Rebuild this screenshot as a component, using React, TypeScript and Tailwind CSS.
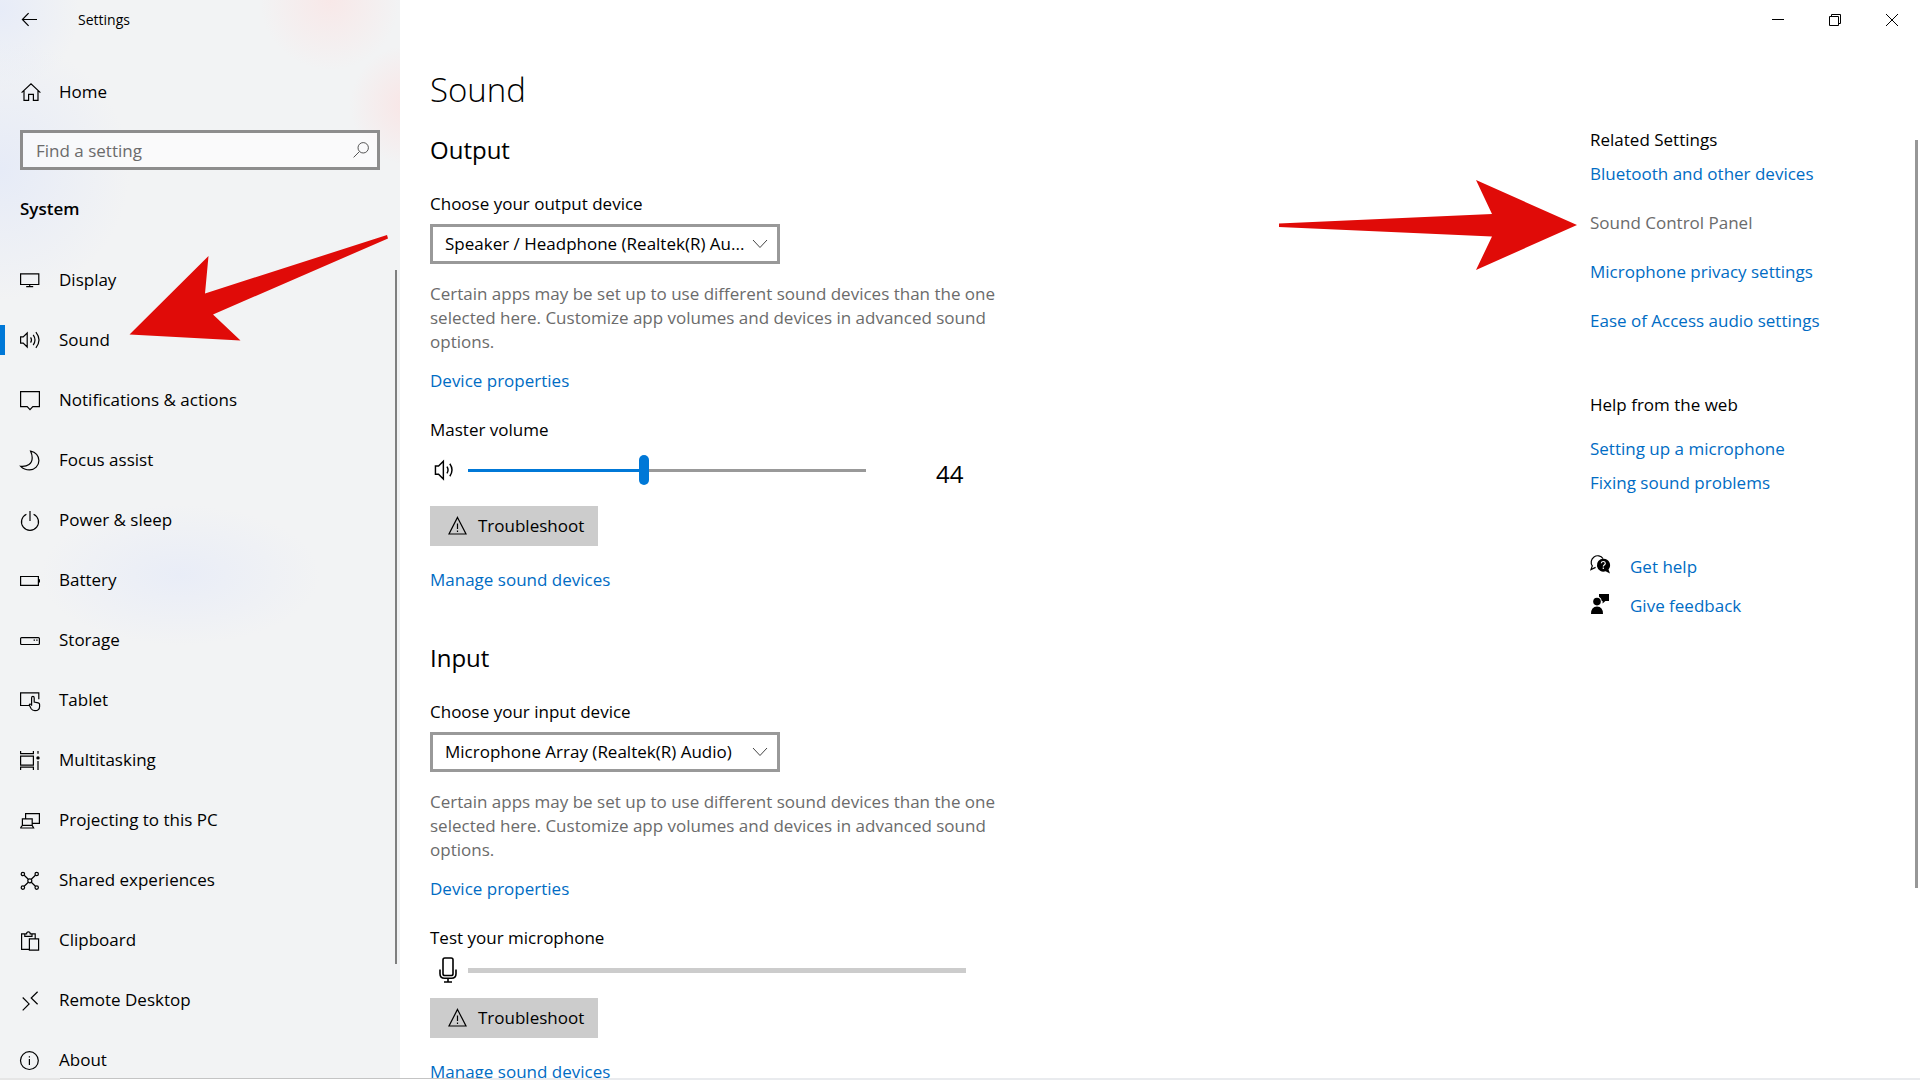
import { useState } from 'react'
import type { ReactNode } from 'react'

/* ── 공통 아이콘 래퍼 (20x20) ─────────────────────────── */
function Icon({ children, className = 'h-5 w-5' }: { children: ReactNode; className?: string }) {
  return (
    <svg
      viewBox="0 0 20 20"
      fill="none"
      stroke="currentColor"
      strokeWidth="1.2"
      className={`shrink-0 overflow-visible ${className}`}
      aria-hidden="true"
    >
      {children}
    </svg>
  )
}

interface NavItem {
  label: string
  icon: ReactNode
}

const NAV_ITEMS: NavItem[] = [
  {
    label: 'Display',
    icon: <path d="M.6 3.9h18.2v10.6H.6zM9.7 14.5v2.2M6.2 16.7h7" />,
  },
  {
    label: 'Sound',
    icon: (
      <path d="M.6 6.9h2.6L7.2 3v14l-4-3.900H.6zM10.6 7.400q1.800 2.600 0 5.200M13.200 4.900q3.600 5.100 0 10.200M15.900 2.200q6.200 7.800 0 15.600" />
    ),
  },
  {
    label: 'Notifications & actions',
    icon: <path d="M.6 1.6h18.8v15h-6.6L10 19.6l-2.8-3H.6z" />,
  },
  {
    label: 'Focus assist',
    icon: (
      <path d="M10.6 1.2c5 .8 8.3 4.6 8.3 9.3a9.3 9.3 0 0 1-9.3 9.4c-3.6 0-6.8-1.4-8.9-3.6 6.8.6 11.5-2.4 11.5-8.5 0-2.4-.6-4.6-1.6-6.6z" />
    ),
  },
  {
    label: 'Power & sleep',
    icon: <path d="M6.4 4.2a8.5 8.5 0 1 0 7.2 0M10 1v10" />,
  },
  {
    label: 'Battery',
    icon: <path d="M.6 6.5h17.8v8.8H.6zM19.4 9.2v3.4" />,
  },
  {
    label: 'Storage',
    icon: (
      <>
        <rect x=".6" y="7.6" width="18.8" height="6.9" rx="1" />
        <path d="M13.6 10.2H15M16.2 10.2h1.4" />
      </>
    ),
  },
  {
    label: 'Tablet',
    icon: (
      <path d="M9 15.5H.6V2.9h18.2v6.3M11.6 15.800V7.900q0-1.500 1.300-1.500t1.300 1.500v4.200l4 .8q1.400.3 1.400 1.700v1.800q0 4.200-4.700 4.200-2.600 0-3.700-1.800l-1.700-3.200q-.5-1.300.6-1.600.9-.1 1.500 1.200" />
    ),
  },
  {
    label: 'Multitasking',
    icon: (
      <>
        <path d="M.6 1v2.6h12.8V1M.6 6.2h12.8v9H.6zM.6 19.900v-2.800h12.800v2.800M18 1v2.800M18 11v8.900" />
        <circle cx="18" cy="7.9" r="1.7" fill="currentColor" stroke="none" />
      </>
    ),
  },
  {
    label: 'Projecting to this PC',
    icon: <path d="M5.6 8.700V3.600h13.800v9.800h-7.200M2.400 15.400V8.900h9.800v6.500M.8 18v-.6l1.600-2h9.800l1.400 2.600z" />,
  },
  {
    label: 'Shared experiences',
    icon: (
      <>
        <circle cx="2.9" cy="4" r="1.7" />
        <circle cx="16.7" cy="4" r="1.7" />
        <circle cx="2.9" cy="17.6" r="1.7" />
        <circle cx="16.7" cy="17.6" r="1.7" />
        <circle cx="9.8" cy="10.8" r="2" />
        <path d="m4.200 5.300 4.100 4M15.400 5.300l-4.100 4M4.200 16.300l4.100-4M15.400 16.300l-4.100-4" />
      </>
    ),
  },
  {
    label: 'Clipboard',
    icon: <path d="M9 19.400H1.600V3.800h3.200M12 3.800h3.200v4.900M9.400 8.800h9.200v11.400H9.400zM4.800 6.400V3.800h1.800q0-2 1.800-2t1.800 2H12v2.600z" />,
  },
  {
    label: 'Remote Desktop',
    icon: <path d="m2.7 7.500 6.400 6.400-6.400 6.500M17.600 1.700 11.200 8l6.400 6.300" />,
  },
  {
    label: 'About',
    icon: (
      <>
        <circle cx="9.4" cy="10.6" r="8.9" />
        <path d="M9.4 9v6M9.4 6.200v1.400" />
      </>
    ),
  },
]

const LINK = 'text-[#006cc4] hover:text-gray-500'

/* ── 장치 선택 드롭다운 ──────────────────────────────── */
function DeviceSelect({ id, label, value }: { id: string; label: string; value: string }) {
  return (
    <div className="mt-[26px]">
      <label htmlFor={id} className="block">
        {label}
      </label>
      <div className="relative mt-2 w-[350px]">
        <select
          id={id}
          className="h-10 w-full appearance-none border-[3px] border-[#999999] bg-white pl-3 pr-7 outline-none"
        >
          <option>{value}</option>
        </select>
        <svg
          viewBox="0 0 16 10"
          fill="none"
          stroke="#444"
          className="pointer-events-none absolute right-3 top-[15px] h-[10px] w-4"
          aria-hidden="true"
        >
          <path d="m1 1 7 7.500L15 1" />
        </svg>
      </div>
      <p className="mt-[18px] text-[#6b6b6b]">
        Certain apps may be set up to use different sound devices than the one
        <br />
        selected here. Customize app volumes and devices in advanced sound
        <br />
        options.
      </p>
      <a href="#properties" className={`mt-[15px] block w-fit ${LINK}`}>
        Device properties
      </a>
    </div>
  )
}

/* ── 문제 해결 버튼 + 관리 링크 ──────────────────────── */
function DeviceActions() {
  return (
    <>
      <button type="button" className="flex h-10 w-[168px] items-center gap-[10px] bg-[#cccccc] pl-[18px]">
        <Icon>
          <path d="M9.500 1.400 18 18H1zM9.500 7.400v5.600M9.500 14.400v1.500" />
        </Icon>
        Troubleshoot
      </button>
      <a href="#manage" className={`mt-[22px] block w-fit whitespace-nowrap ${LINK}`}>
        Manage sound devices
      </a>
    </>
  )
}

function Sidebar() {
  return (
    <aside className="relative flex w-[400px] shrink-0 flex-col bg-[#f2f3f4] bg-[radial-gradient(circle_at_330px_0px,#f8e8e8_0px,transparent_70px),radial-gradient(circle_at_410px_105px,#f9e5e5_0px,transparent_60px),radial-gradient(circle_at_0px_170px,#e6ebf7_0px,transparent_130px),radial-gradient(circle_at_0px_10px,#e7ecf8_0px,transparent_80px),radial-gradient(ellipse_140px_70px_at_180px_575px,#e9edf7_0%,transparent_100%)]">
      <header className="flex h-10 shrink-0 items-center pl-5">
        <button type="button" aria-label="Back" className="h-5 w-5">
          <Icon>
            <path d="M17 9.500H2.500M8.600 3.200 2.400 9.500l6.200 6.300" />
          </Icon>
        </button>
        <h2 className="pl-[38px] text-[14px]">Settings</h2>
      </header>

      <a href="#home" className="mt-8 flex h-10 shrink-0 items-center pl-5">
        <Icon>
          <path d="M1.600 10.600 11 1.900l9.400 8.700M4 8.500v9.900h4.600v-6h4.800v6H18V8.500" />
        </Icon>
        <span className="pl-[19px]">Home</span>
      </a>

      <div className="relative mx-5 mt-[18px] shrink-0">
        <input
          type="text"
          aria-label="Find a setting"
          placeholder="Find a setting"
          className="block h-10 w-full border-[3px] border-[#8d8d8d] bg-white/60 px-[13px] outline-none placeholder:text-[#6b6b6b] placeholder:opacity-100"
        />
        <svg
          viewBox="0 0 16 16"
          fill="none"
          stroke="#555"
          className="absolute right-[11px] top-3 h-4 w-4"
          aria-hidden="true"
        >
          <circle cx="10.2" cy="5.8" r="5.2" />
          <path d="M6.400 9.600.6 15.400" />
        </svg>
      </div>

      <h1 className="mt-[27px] shrink-0 pl-5 font-semibold">System</h1>

      <nav className="mt-[29px] shrink-0">
        <ul>
          {NAV_ITEMS.map((item) => (
            <li key={item.label} className="relative">
              {item.label === 'Sound' && (
                <span className="absolute left-0 top-[15px] h-[30px] w-[5px] bg-[#0078d7]" />
              )}
              <a href={`#${item.label}`} className="flex h-[60px] items-center pl-5">
                <Icon>{item.icon}</Icon>
                <span className="pl-[19px]">{item.label}</span>
              </a>
              {item.label === 'Sound' && (
                <svg
                  viewBox="0 0 260 108"
                  fill="#e00b08"
                  className="pointer-events-none absolute -top-[75px] left-[129px] h-[108px] w-[260px]"
                  aria-hidden="true"
                >
                  <path d="M.5 99.500 79.500 21 76 58.500 258 0l1 3.500L84 79.500l27.500 26z" />
                </svg>
              )}
            </li>
          ))}
        </ul>
      </nav>

      <div className="absolute right-[3px] top-[270px] h-[694px] w-[2px] bg-[#7f7f7f]" />
    </aside>
  )
}

function WindowControls() {
  return (
    <header className="flex h-10 shrink-0 justify-end text-black">
      <button type="button" aria-label="Minimize" className="flex w-[57px] items-center justify-center">
        <svg viewBox="0 0 12 12" className="h-3 w-3" stroke="currentColor" aria-hidden="true">
          <path d="M0 5.500h12" />
        </svg>
      </button>
      <button type="button" aria-label="Restore" className="flex w-[57px] items-center justify-center">
        <svg viewBox="0 0 12 12" className="h-3 w-3" fill="none" stroke="currentColor" aria-hidden="true">
          <path d="M.5 2.500h9v9h-9zM2.500 2.500v-2h9v9h-2" />
        </svg>
      </button>
      <button type="button" aria-label="Close" className="flex w-[57px] items-center justify-center">
        <svg viewBox="0 0 12 12" className="h-3 w-3" stroke="currentColor" aria-hidden="true">
          <path d="m0 0 12 12M12 0 0 12" />
        </svg>
      </button>
    </header>
  )
}

function RelatedSettings() {
  return (
    <aside className="w-[330px] shrink-0 whitespace-nowrap pt-[88px]">
      <h2>Related Settings</h2>
      <ul className="mt-[10px] space-y-[25px]">
        <li>
          <a href="#bluetooth" className={LINK}>Bluetooth and other devices</a>
        </li>
        <li className="relative">
          <a href="#panel" className="text-[#6b6b6b]">Sound Control Panel</a>
          <svg
            viewBox="0 0 298 90"
            fill="#e00b08"
            className="pointer-events-none absolute -left-[311px] -top-[31px] h-[90px] w-[298px]"
            aria-hidden="true"
          >
            <path d="M0 43.500 213 34 197 0l101 45-101 45 16-33.500L0 47z" />
          </svg>
        </li>
        <li>
          <a href="#privacy" className={LINK}>Microphone privacy settings</a>
        </li>
        <li>
          <a href="#ease" className={LINK}>Ease of Access audio settings</a>
        </li>
      </ul>

      <h2 className="mt-[60px]">Help from the web</h2>
      <ul className="mt-5 space-y-[10px]">
        <li>
          <a href="#setup" className={LINK}>Setting up a microphone</a>
        </li>
        <li>
          <a href="#fixing" className={LINK}>Fixing sound problems</a>
        </li>
      </ul>

      <ul className="mt-[60px] space-y-[15px]">
        <li className="flex gap-5">
          <Icon>
            <path d="M5.600 12.400 1 14.600l1.300-3.700A6.200 6.200 0 1 1 13 3.600" />
            <path
              d="M13.300 3.700a6.500 6.500 0 1 0 2.300 12.600L20 18.600l-1.500-4.200A6.500 6.500 0 0 0 13.300 3.700z"
              fill="currentColor"
              stroke="none"
            />
            <path d="M11.300 8.200q.2-1.700 2-1.700t2 1.700q0 1-1.100 1.700-.9.600-.9 1.600M13.300 12.600v1.500" stroke="#fff" />
          </Icon>
          <a href="#help" className={LINK}>Get help</a>
        </li>
        <li className="flex gap-5">
          <Icon>
            <g fill="currentColor" stroke="none">
              <circle cx="7" cy="7.600" r="3.800" />
              <path d="M1 20q0-7.600 6-7.600t6 7.600zM9 0h10v7h-3.600L12.600 9.400V7h-.8Q11.600 4 9 2.800z" />
            </g>
          </Icon>
          <a href="#feedback" className={LINK}>Give feedback</a>
        </li>
      </ul>
    </aside>
  )
}

export default function App() {
  const [volume, setVolume] = useState(44)

  return (
    <div className="flex h-screen flex-col overflow-hidden bg-white font-['Open_Sans','Noto_Sans',sans-serif] text-[17px] leading-6 text-black">
      <div className="flex min-h-0 flex-1 overflow-hidden">
        <Sidebar />

        <div className="relative flex min-w-0 flex-1 flex-col">
          <WindowControls />

          <div className="flex min-h-0 flex-1 justify-between overflow-hidden pl-[30px]">
            <main className="w-[600px] shrink-0 pt-[26px]">
              <h1 className="text-[33px] font-light leading-[48px]">Sound</h1>

              <section>
                <h2 className="mt-5 text-[24px] leading-8">Output</h2>
                <DeviceSelect
                  id="output-device"
                  label="Choose your output device"
                  value="Speaker / Headphone (Realtek(R) Au..."
                />
                <label htmlFor="volume" className="mt-[25px] block">
                  Master volume
                </label>
                <div className="mb-[21px] mt-[13px] flex h-[30px] items-center">
                  <Icon className="ml-1 h-6 w-6">
                    <path d="M1.200 6.600h2.600l4-4v15l-4-4H1.200zM10.800 7.200q1.800 2.800 0 5.600M13.200 4.800q3.600 5.200 0 10.400" />
                  </Icon>
                  <input
                    id="volume"
                    type="range"
                    min={0}
                    max={100}
                    value={volume}
                    onChange={(e) => setVolume(Number(e.target.value))}
                    style={{
                      backgroundImage: `linear-gradient(to right, #0078d7 ${volume}%, #999999 ${volume}%)`,
                    }}
                    className="ml-[10px] h-[3px] w-[398px] appearance-none outline-none [&::-webkit-slider-thumb]:h-[30px] [&::-webkit-slider-thumb]:w-[10px] [&::-webkit-slider-thumb]:appearance-none [&::-webkit-slider-thumb]:rounded-full [&::-webkit-slider-thumb]:bg-[#0078d7]"
                  />
                  <output htmlFor="volume" className="ml-[70px] pt-2 text-[24px] leading-8">
                    {volume}
                  </output>
                </div>
                <DeviceActions />
              </section>

              <section>
                <h2 className="mt-[50px] text-[24px] leading-8">Input</h2>
                <DeviceSelect
                  id="input-device"
                  label="Choose your input device"
                  value="Microphone Array (Realtek(R) Audio)"
                />
                <h3 className="mt-[25px]">Test your microphone</h3>
                <div className="mb-[13px] mt-[5px] flex h-[30px] items-center">
                  <svg
                    viewBox="0 0 18 26"
                    fill="none"
                    stroke="currentColor"
                    strokeWidth="1.600"
                    className="ml-[9px] h-[26px] w-[18px]"
                    aria-hidden="true"
                  >
                    <rect x="4" y="1" width="10" height="17.500" rx="1.800" />
                    <path d="M1 12.500v4.200Q1 21.300 5.600 21.300h6.800q4.600 0 4.600-4.600v-4.200M9 21.300V25M5 25h8" />
                  </svg>
                  <div className="ml-[11px] h-[5px] w-[498px] bg-[#cccccc]" />
                </div>
                <DeviceActions />
              </section>
            </main>

            <RelatedSettings />
          </div>

          <div className="absolute right-[2px] top-[140px] h-[748px] w-[3px] bg-[#979797]" />
        </div>
      </div>

      {/* 작업 표시줄 윗선 */}
      <div className="flex h-[2px] shrink-0">
        <div className="w-[60px] bg-[#e6e6e6]" />
        <div className="w-[430px] border-t border-[#c4c4c4] bg-white" />
        <div className="flex-1 bg-[#e9ebee]" />
      </div>
    </div>
  )
}
